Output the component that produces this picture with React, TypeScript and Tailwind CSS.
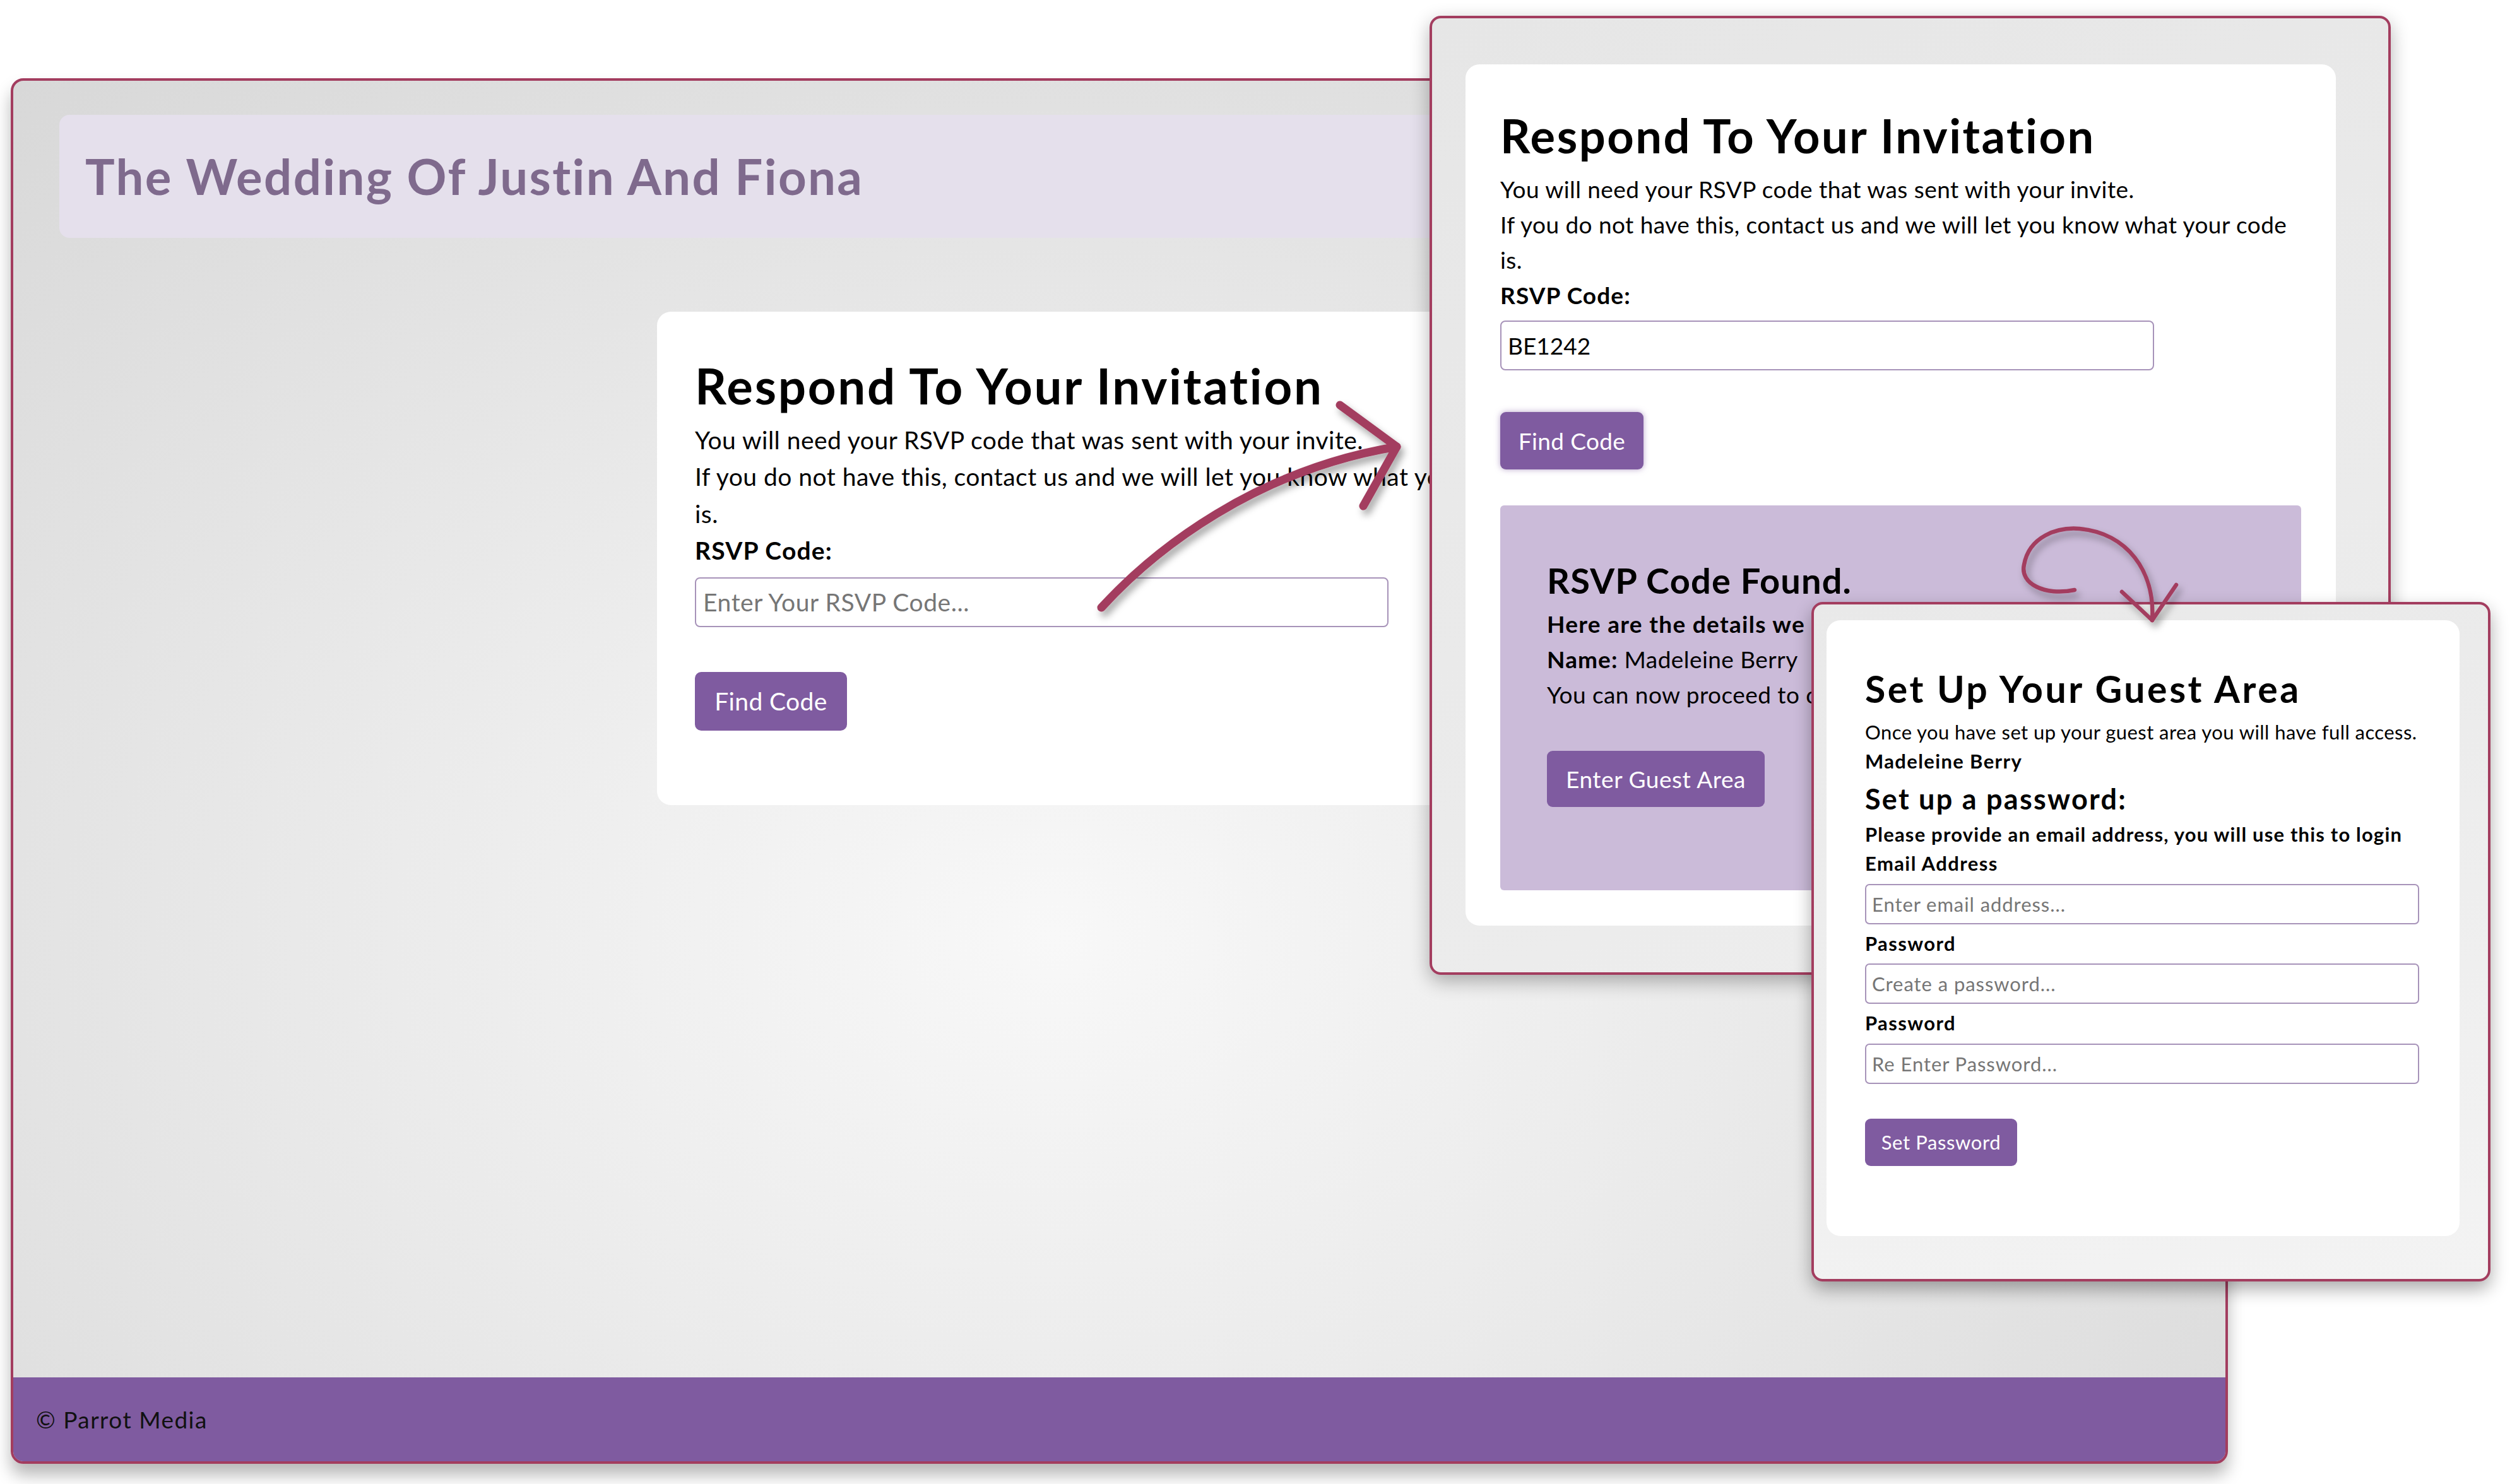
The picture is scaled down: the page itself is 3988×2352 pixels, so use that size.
import React from "react";

const crimson = "#a33d5f";

// Fenster 1: die eigentliche Seite
const MainWindow: React.FC = () => {
  return (
    <div className="ml-[17px] mt-[124px] flex h-[2196px] w-[3513px] flex-col overflow-hidden rounded-[20px] border-[4px] border-[#a33d5f] bg-[radial-gradient(ellipse_at_47%_62%,#f8f8f8_0%,#ebebeb_40%,#d6d6d6_100%)] shadow-[0_18px_26px_rgba(0,0,0,0.28)]">
      <div className="mx-[73px] mt-[54px] flex h-[195px] items-center rounded-[16px] bg-[#e5e0ec] pl-[41px]">
        <h1 className="text-[78px] font-bold leading-[1.2] tracking-[0.03em] text-[#7f6a8d]">The Wedding Of Justin And Fiona</h1>
      </div>

      <div className="flex-1">
        <div className="mx-auto mt-[117px] h-[782px] w-[1465px] rounded-[22px] bg-white px-[60px] pt-[71px]">
          <h1 className="text-[78px] font-bold leading-[1.2] tracking-[0.035em] text-black">Respond To Your Invitation</h1>
          <div className="mt-[9px] text-[39px] leading-[58.5px] tracking-[0.012em] text-black">
            <p className="whitespace-nowrap">You will need your RSVP code that was sent with your invite.</p>
            <p className="whitespace-nowrap">If you do not have this, contact us and we will let you know what your code</p>
            <p>is.</p>
            <p className="font-bold tracking-[0.03em]">RSVP Code:</p>
          </div>
          <input
            readOnly
            placeholder="Enter Your RSVP Code..."
            className="mt-[13px] block h-[79px] w-[1099px] rounded-[8px] border-[2px] border-[#a793b9] bg-white px-[11px] text-[39px] tracking-[0.015em] text-black outline-none placeholder:text-[#767676]"
          />
          <button className="mt-[71px] h-[93px] w-[241px] rounded-[10px] bg-[#7f5ba0] text-[39px] tracking-[0.01em] text-white">Find Code</button>
        </div>
      </div>

      <footer className="flex h-[133px] items-center bg-[#7f5ba0] pl-[36px] text-[37px] tracking-[0.04em] text-[#111]">© Parrot Media</footer>
    </div>
  );
};

// Fenster 2: Code gefunden
const FoundWindow: React.FC = () => {
  return (
    <div className="absolute left-[2265px] top-[25px] h-[1520px] w-[1523px] rounded-[18px] border-[4px] border-[#a33d5f] bg-[linear-gradient(160deg,#e6e6e6_0%,#eeeeee_100%)] shadow-[0_10px_30px_rgba(0,0,0,0.3)]">
      <div className="ml-[53px] mt-[73px] h-[1365px] w-[1379px] rounded-[22px] bg-white px-[55px] pt-[69px]">
        <h1 className="text-[74px] font-bold leading-[1.2] tracking-[0.034em] text-black">Respond To Your Invitation</h1>
        <div className="mt-[12px] text-[37px] leading-[56px] tracking-[0.012em] text-black">
          <p className="whitespace-nowrap">You will need your RSVP code that was sent with your invite.</p>
          <p className="whitespace-nowrap">If you do not have this, contact us and we will let you know what your code</p>
          <p>is.</p>
          <p className="font-bold tracking-[0.03em]">RSVP Code:</p>
        </div>
        <input
          readOnly
          value="BE1242"
          className="mt-[12px] block h-[79px] w-[1036px] rounded-[8px] border-[2px] border-[#a793b9] bg-white px-[10px] text-[37px] text-black outline-none"
        />
        <button className="mt-[66px] h-[91px] w-[227px] rounded-[9px] bg-[#7f5ba0] text-[37px] tracking-[0.01em] text-white shadow-[0_0_10px_rgba(127,91,160,0.55)]">
          Find Code
        </button>

        <div className="mt-[57px] h-[610px] rounded-[6px] bg-[#cbbbd9] px-[74px] pt-[85px]">
          <h2 className="text-[56px] font-bold leading-[1.2] tracking-[0.02em] text-black">RSVP Code Found.</h2>
          <div className="mt-[8px] text-[37px] leading-[56px] tracking-[0.012em] text-black">
            <p className="whitespace-nowrap font-bold tracking-[0.035em]">Here are the details we have for you:</p>
            <p className="whitespace-nowrap">
              <span className="font-bold tracking-[0.03em]">Name:</span> Madeleine Berry
            </p>
            <p className="whitespace-nowrap">You can now proceed to create your guest area.</p>
          </div>
          <button className="mt-[61px] h-[89px] w-[345px] rounded-[9px] bg-[#7f5ba0] text-[37px] tracking-[0.015em] text-white">
            Enter Guest Area
          </button>
        </div>
      </div>
    </div>
  );
};

const Field: React.FC<{ label: string; placeholder: string; first?: boolean }> = ({ label, placeholder, first }) => (
  <div className={first ? "" : "mt-[7px]"}>
    <p className="text-[31px] font-bold leading-[46.5px] tracking-[0.045em] text-black">{label}</p>
    <input
      readOnly
      placeholder={placeholder}
      className="mt-[9px] block h-[64px] w-[878px] rounded-[7px] border-[2px] border-[#a793b9] bg-white px-[9px] text-[31px] tracking-[0.03em] text-black outline-none placeholder:text-[#767676]"
    />
  </div>
);

// Fenster 3: Gastbereich einrichten
const GuestWindow: React.FC = () => {
  return (
    <div className="absolute left-[2870px] top-[954px] h-[1077px] w-[1076px] rounded-[18px] border-[4px] border-[#a33d5f] bg-[linear-gradient(170deg,#e9e9e9_0%,#f3f3f3_100%)] shadow-[0_12px_28px_rgba(0,0,0,0.33)]">
      <div className="ml-[20px] mt-[25px] h-[976px] w-[1003px] rounded-[22px] bg-white px-[61px] pt-[74px]">
        <h1 className="whitespace-nowrap text-[59px] font-bold leading-[1.2] tracking-[0.06em] text-black">Set Up Your Guest Area</h1>
        <div className="mt-[9px] text-[31px] leading-[46.5px] text-black">
          <p className="whitespace-nowrap tracking-[0.014em]">Once you have set up your guest area you will have full access.</p>
          <p className="font-bold tracking-[0.044em]">Madeleine Berry</p>
        </div>
        <h2 className="mt-[9px] text-[45px] font-bold leading-[1.2] tracking-[0.05em] text-black">Set up a password:</h2>
        <p className="mt-[6px] whitespace-nowrap text-[31px] font-bold leading-[46.5px] tracking-[0.038em] text-black">
          Please provide an email address, you will use this to login
        </p>
        <Field first label="Email Address" placeholder="Enter email address..." />
        <Field label="Password" placeholder="Create a password..." />
        <Field label="Password" placeholder="Re Enter Password..." />
        <button className="mt-[55px] h-[75px] w-[241px] rounded-[9px] bg-[#7f5ba0] text-[31px] tracking-[0.02em] text-white">
          Set Password
        </button>
      </div>
    </div>
  );
};

const Arrows: React.FC = () => (
  <svg className="pointer-events-none absolute left-0 top-0" width={3988} height={2352} viewBox="0 0 3988 2352" fill="none">
    <defs>
      <filter id="arrowShadow" x="-20%" y="-20%" width="140%" height="140%">
        <feDropShadow dx="5" dy="8" stdDeviation="6" floodColor="#000" floodOpacity="0.35" />
      </filter>
    </defs>
    <g filter="url(#arrowShadow)" stroke={crimson} strokeLinecap="round" strokeLinejoin="round">
      <path d="M1745 963 C1830 870 1990 745 2213 708" strokeWidth={13} />
      <path d="M2123 642 L2213 708 L2160 802" strokeWidth={13} />
      <path d="M3287 935 C3240 945 3200 925 3207 895 C3215 850 3260 835 3295 838 C3370 845 3415 905 3410 983" strokeWidth={6.5} />
      <path d="M3362 938 L3410 983 L3448 927" strokeWidth={6.5} />
    </g>
  </svg>
);

export default function App() {
  return (
    <div className="relative h-[2352px] w-[3988px] overflow-hidden bg-white font-['Lato',sans-serif]">
      <MainWindow />
      <FoundWindow />
      <GuestWindow />
      <Arrows />
    </div>
  );
}
